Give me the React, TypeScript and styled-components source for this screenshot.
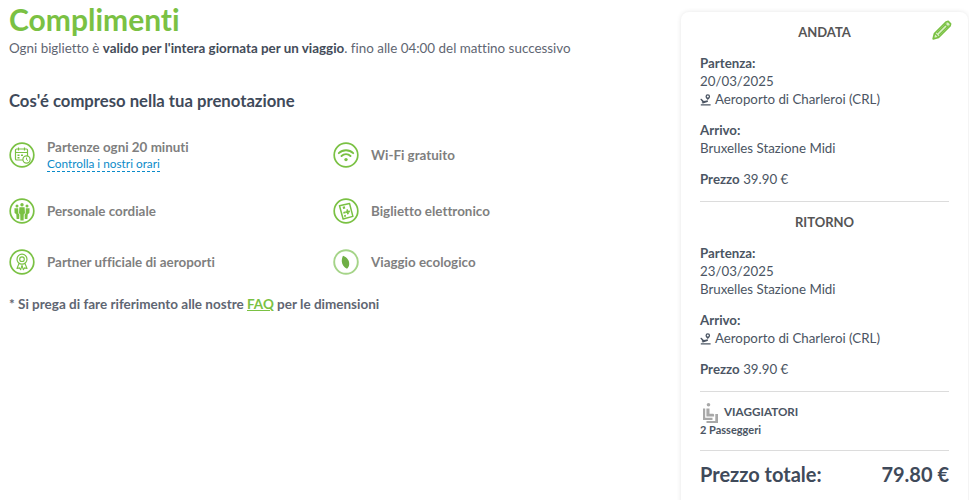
import React from 'react'
import styled, { createGlobalStyle } from 'styled-components'

const GREEN = '#7ac143'

const GlobalStyle = createGlobalStyle`
  html, body {
    margin: 0;
    padding: 0;
    height: 500px;
    overflow: hidden;
    background: #fff;
  }
  body {
    font-family: Lato, 'Noto Sans', 'Liberation Sans', sans-serif;
    font-variant-ligatures: none;
    color: #3f4a5a;
  }
`

function Ring({ children }: { children: React.ReactNode }) {
  return (
    <svg width="26" height="26" viewBox="0 0 26 26" fill="none" stroke={GREEN}>
      <circle cx="13" cy="13" r="11.8" strokeWidth="1.7" />
      {children}
    </svg>
  )
}

const CalendarIcon = () => (
  <Ring>
    <rect x="6.500" y="7" width="12" height="11" rx="1" strokeWidth="1.200" />
    <path d="M6.500 10.500h12M9.500 5.500v3M15.500 5.500v3" strokeWidth="1.200" />
    <path d="M8.500 12.500h2v1.500h-2zM12 12.500h2v1.500h-2zM8.500 15h2v1.500h-2z" fill={GREEN} stroke="none" />
    <circle cx="17.500" cy="17.500" r="3.600" fill="#fff" strokeWidth="1.200" />
    <path d="M17.500 15.600v2l1.400 1" strokeWidth="1" />
  </Ring>
)

const StaffIcon = () => (
  <Ring>
    <g fill={GREEN} stroke="none">
      <circle cx="13" cy="6.800" r="1.700" />
      <circle cx="8" cy="8" r="1.500" />
      <circle cx="18" cy="8" r="1.500" />
      <path d="M10.400 9.200h5.200l.4 6-1.200 1-.2 6.300h-3.200l-.2-6.300-1.200-1z" />
      <path d="M5.400 10.200h3.800l.2 5.400 1 1-.2 4.400H7.600l-.3-4.800-1.700-1.200z" />
      <path d="M20.600 10.200h-3.800l-.2 5.400-1 1 .2 4.400h2.600l.3-4.800 1.700-1.200z" />
    </g>
  </Ring>
)

const BadgeIcon = () => (
  <Ring>
    <circle cx="13" cy="10.200" r="5" strokeWidth="1.200" />
    <circle cx="13" cy="10.200" r="2.300" strokeWidth="1.100" />
    <path d="M10 14.500l-2 5 2.400-.6 1.300 1.800 1.300-4.400 1.300 4.400 1.300-1.800 2.400.6-2-5" strokeWidth="1.100" strokeLinejoin="round" />
  </Ring>
)

const WifiIcon = () => (
  <Ring>
    <path d="M5.800 11.200a10.200 10.200 0 0 1 14.400 0" strokeWidth="1.900" strokeLinecap="round" />
    <path d="M8.500 14a6.400 6.400 0 0 1 9 0" strokeWidth="1.900" strokeLinecap="round" />
    <circle cx="13" cy="17.600" r="1.700" fill={GREEN} stroke="none" />
  </Ring>
)

const TicketIcon = () => (
  <Ring>
    <path d="M6.500 7.800l10-2.400 3.400 13-9.800 2.600z" strokeWidth="1.500" strokeLinejoin="round" />
    <g fill={GREEN} stroke="none">
      <path d="M9.600 8.800l2.200-.5.5 2.200-2.200.5z" />
      <path d="M13.400 11.600l1.500-.3.300 1.500 1.500-.3.400 1.700-1.500.3.300 1.500-1.700.4-.3-1.500-1.500.3-.4-1.700 1.500-.3z" />
      <path d="M10.200 14l1.700-.4.400 1.700-1.700.4zM11 17.200l1.700-.4.400 1.700-1.700.4z" />
    </g>
  </Ring>
)

const LeafIcon = () => (
  <svg width="26" height="26" viewBox="0 0 26 26" fill="none">
    <circle cx="13" cy="13" r="11.800" stroke="#a5d488" strokeWidth="1.900" />
    <path d="M10 6.800c4.400 1.800 6.600 5 6.200 8.600-.2 2-1.200 3.400-2.200 4.400-3-1.400-5-4-5.200-7.200-.1-2.200.4-4.200 1.200-5.800z" fill="#6fae45" />
  </svg>
)

const PencilIcon = () => (
  <svg width="20" height="20" viewBox="0 0 20 20" fill="none" stroke={GREEN} strokeLinejoin="round">
    <path d="M1.200 18.800l1.300-5.300L14 2l2.200-.6 2.400 2.400-.6 2.200L6.500 17.500z" strokeWidth="1.700" fill="#d9efc6" />
    <path d="M3 13.500l3.500 3.500M12.300 3.700l4 4M5 13l9.500-9.500M7 15l9.500-9.500" strokeWidth="1.100" />
  </svg>
)

const AirportIcon = () => (
  <svg width="12" height="12" viewBox="0 0 12 12" fill="#4b5563">
    <path d="M7.800.2a2.300 2.300 0 0 1 2.300 2.300c0 1.400-1.400 2.800-2.300 3.400-.9-.6-2.300-2-2.300-3.400A2.300 2.300 0 0 1 7.800.2zm0 1.300a1 1 0 1 0 0 2 1 1 0 0 0 0-2z" />
    <path d="M.2 5l1.300-.3 2.300 2.300 2.900-.6c1.300-.3 1.900 1.100.8 1.600L3 9.600 1.500 8.900l1-.7zM.8 10.300h9.800v1.300H.8z" />
  </svg>
)

const SeatIcon = () => (
  <svg width="15" height="20" viewBox="0 0 15 20" fill="#a8a8a8">
    <circle cx="5.500" cy="1.800" r="1.800" />
    <path d="M0 5.500h2.200v9.300h7.300V17H0z" />
    <path d="M3.400 5.500h3.100v5.200h3.800l.8.800v1.900H3.400z" />
    <path d="M12.300 11h2.700v9h-2.700zM3.500 18h9v2h-9z" />
  </svg>
)

function App() {
  return (
    <>
      <GlobalStyle />
      <Page>
        <Main>
          <Title>Complimenti</Title>
          <Intro>
            Ogni biglietto è <b>valido per l'intera giornata per un viaggio</b>. fino alle 04:00 del mattino successivo
          </Intro>
          <Heading>Cos'é compreso nella tua prenotazione</Heading>
          <Features>
            <Feature $height={46}>
              <CalendarIcon />
              <div>
                <FeatureLabel>Partenze ogni 20 minuti</FeatureLabel>
                <ScheduleLink href="#">Controlla i nostri orari</ScheduleLink>
              </div>
            </Feature>
            <Feature $height={46}>
              <WifiIcon />
              <FeatureLabel>Wi-Fi gratuito</FeatureLabel>
            </Feature>
            <Feature>
              <StaffIcon />
              <FeatureLabel>Personale cordiale</FeatureLabel>
            </Feature>
            <Feature>
              <TicketIcon />
              <FeatureLabel>Biglietto elettronico</FeatureLabel>
            </Feature>
            <Feature>
              <BadgeIcon />
              <FeatureLabel>Partner ufficiale di aeroporti</FeatureLabel>
            </Feature>
            <Feature>
              <LeafIcon />
              <FeatureLabel>Viaggio ecologico</FeatureLabel>
            </Feature>
          </Features>
          <Note>
            * Si prega di fare riferimento alle nostre <a href="#">FAQ</a> per le dimensioni
          </Note>
        </Main>

        <Summary>
          <LegTitle>
            ANDATA
            <EditButton>
              <PencilIcon />
            </EditButton>
          </LegTitle>
          <Block>
            <Strong>Partenza:</Strong>
            <Line>20/03/2025</Line>
            <Line>
              <AirportIcon /> Aeroporto di Charleroi (CRL)
            </Line>
          </Block>
          <NextBlock>
            <Strong>Arrivo:</Strong>
            <Line>Bruxelles Stazione Midi</Line>
          </NextBlock>
          <NextBlock>
            <b>Prezzo</b> 39.90 €
          </NextBlock>
          <Divider />
          <LegTitle>RITORNO</LegTitle>
          <Block>
            <Strong>Partenza:</Strong>
            <Line>23/03/2025</Line>
            <Line>Bruxelles Stazione Midi</Line>
          </Block>
          <NextBlock>
            <Strong>Arrivo:</Strong>
            <Line>
              <AirportIcon /> Aeroporto di Charleroi (CRL)
            </Line>
          </NextBlock>
          <NextBlock>
            <b>Prezzo</b> 39.90 €
          </NextBlock>
          <Divider />
          <Travellers>
            <SeatIcon />
            <span>VIAGGIATORI</span>
          </Travellers>
          <Passengers>2 Passeggeri</Passengers>
          <Divider />
          <Total>
            <span>Prezzo totale:</span>
            <span>79.80 €</span>
          </Total>
        </Summary>
      </Page>
    </>
  )
}

export default App

const Page = styled.div`
  display: flex;
  align-items: flex-start;
  width: 969px;
  height: 500px;
  overflow: hidden;
`

const Main = styled.main`
  width: 681px;
  flex: none;
  padding-left: 9px;
  box-sizing: border-box;
`

const Title = styled.h1`
  margin: 0;
  font-size: 30px;
  line-height: 38px;
  font-weight: 700;
  color: ${GREEN};
`

const Intro = styled.p`
  margin: 1px 0 0;
  font-size: 13.4px;
  line-height: 18px;
  color: #5f6672;

  b {
    font-weight: 700;
    color: #444c59;
  }
`

const Heading = styled.h2`
  margin: 33px 0 0;
  font-size: 16.7px;
  line-height: 22px;
  font-weight: 700;
  color: #3f4a5a;
`

const Features = styled.div`
  display: grid;
  grid-template-columns: 324px 1fr;
  margin-top: 20px;
`

const Feature = styled.div<{ $height?: number }>`
  display: flex;
  align-items: center;
  gap: 12px;
  height: ${(p) => p.$height ?? 51}px;
  margin-bottom: ${(p) => (p.$height ? 7 : 0)}px;

  svg {
    flex: none;
  }
`

const FeatureLabel = styled.div`
  font-size: 13.4px;
  line-height: 18px;
  font-weight: 700;
  color: #7f7f7f;
`

const ScheduleLink = styled.a`
  display: block;
  width: fit-content;
  font-size: 11.8px;
  line-height: 15px;
  color: #0b8bc9;
  text-decoration: none;
  border-bottom: 1px dashed #0b8bc9;
`

const Note = styled.p`
  margin: 8px 0 0;
  font-size: 13.5px;
  line-height: 18px;
  font-weight: 700;
  color: #5f6672;

  a {
    color: ${GREEN};
  }
`

const Summary = styled.aside`
  flex: none;
  width: 287px;
  height: 520px;
  margin-top: 12px;
  padding: 10px 19px 0;
  box-sizing: border-box;
  background: #fff;
  border-radius: 8px;
  box-shadow: 0 0 5px rgba(0, 0, 0, 0.1);
`

const LegTitle = styled.div`
  position: relative;
  text-align: center;
  font-size: 13px;
  line-height: 20px;
  font-weight: 700;
  color: #555;
`

const EditButton = styled.span`
  position: absolute;
  right: -3px;
  top: -2px;
`

const Block = styled.div`
  margin-top: 12px;
  font-size: 13.3px;
  line-height: 18px;
  color: #4b5563;
`

const NextBlock = styled(Block)`
  margin-top: 13px;
`

const Strong = styled.div`
  font-weight: 700;
`

const Line = styled.div`
  svg {
    vertical-align: -2px;
  }
`

const Divider = styled.hr`
  margin: 13px 0 10px;
  border: 0;
  border-top: 1px solid #dcdcdc;
`

const Travellers = styled.div`
  display: flex;
  align-items: flex-start;
  gap: 6px;
  height: 22px;
  padding: 1px 0 0 3px;
  box-sizing: border-box;
  font-size: 11.7px;
  line-height: 16px;
  font-weight: 700;
  color: #4b5563;
`

const Passengers = styled.div`
  margin-top: -1px;
  font-size: 11px;
  line-height: 14px;
  font-weight: 700;
  color: #4b5563;
`

const Total = styled.div`
  display: flex;
  justify-content: space-between;
  margin-top: 1px;
  font-size: 20px;
  line-height: 26px;
  font-weight: 700;
  color: #3f4a5a;
`
